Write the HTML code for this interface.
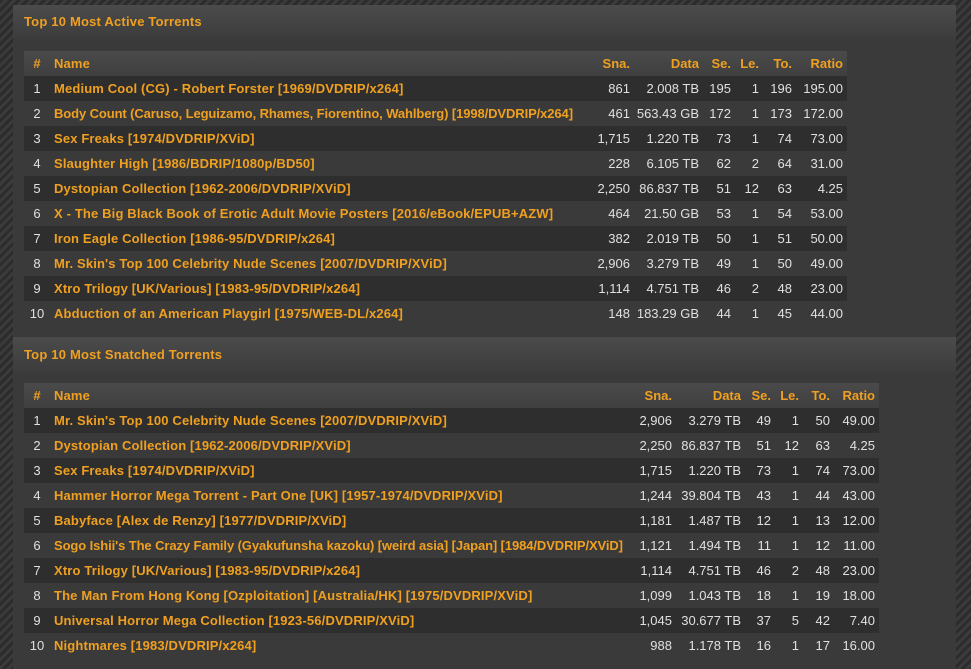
<!DOCTYPE html>
<html><head><style>
html,body{margin:0;width:971px;height:669px;overflow:hidden;}
body{background:#2f2f2f repeating-linear-gradient(135deg,#2c2c2c 0 3px,#3b3b3b 3px 6px);font-family:"Liberation Sans",sans-serif;font-size:13px;}
.wrap{position:absolute;left:13px;top:5px;width:943px;height:664px;background:#3a3a3a;}
.hd{position:absolute;left:0;width:943px;height:34px;background:linear-gradient(#4b4b4b,#3c3c3c);color:#f0a020;font-weight:bold;font-size:13px;line-height:34px;text-indent:11px;letter-spacing:0.2px;}
table{position:absolute;left:11px;border-collapse:collapse;table-layout:fixed;}
td,th{height:25px;padding:0 4px 0 0;white-space:nowrap;overflow:hidden;text-align:right;color:#e0e0e0;}
th{color:#f0a020;font-weight:bold;background:linear-gradient(#4a4a4a,#3f3f3f);}
td.n,th.n{text-align:left;color:#f0a020;font-weight:bold;padding:0 0 0 4px;letter-spacing:0.15px;overflow:visible;}
td.n.t{letter-spacing:-0.1px;}
td.i,th.i{text-align:center;padding:0;}
th.i{color:#f0a020}
tr.o td{background:#2e2e2e;}
tr.e td{background:#3a3a3a;}
</style></head><body>
<div class="wrap">
<div class="hd" style="top:0">Top 10 Most Active Torrents</div>
<table style="top:46px;width:823px">
<colgroup><col style="width:26px"><col style="width:539px"><col style="width:45px"><col style="width:69px"><col style="width:32px"><col style="width:28px"><col style="width:33px"><col style="width:51px"></colgroup>
<tr><th class="i">#</th><th class="n">Name</th><th>Sna.</th><th>Data</th><th>Se.</th><th>Le.</th><th>To.</th><th>Ratio</th></tr>
<tr class="o"><td class="i">1</td><td class="n">Medium Cool (CG) - Robert Forster [1969/DVDRIP/x264]</td><td>861</td><td>2.008 TB</td><td>195</td><td>1</td><td>196</td><td>195.00</td></tr>
<tr class="e"><td class="i">2</td><td class="n t">Body Count (Caruso, Leguizamo, Rhames, Fiorentino, Wahlberg) [1998/DVDRIP/x264]</td><td>461</td><td>563.43 GB</td><td>172</td><td>1</td><td>173</td><td>172.00</td></tr>
<tr class="o"><td class="i">3</td><td class="n">Sex Freaks [1974/DVDRIP/XViD]</td><td>1,715</td><td>1.220 TB</td><td>73</td><td>1</td><td>74</td><td>73.00</td></tr>
<tr class="e"><td class="i">4</td><td class="n">Slaughter High [1986/BDRIP/1080p/BD50]</td><td>228</td><td>6.105 TB</td><td>62</td><td>2</td><td>64</td><td>31.00</td></tr>
<tr class="o"><td class="i">5</td><td class="n">Dystopian Collection [1962-2006/DVDRIP/XViD]</td><td>2,250</td><td>86.837 TB</td><td>51</td><td>12</td><td>63</td><td>4.25</td></tr>
<tr class="e"><td class="i">6</td><td class="n">X - The Big Black Book of Erotic Adult Movie Posters [2016/eBook/EPUB+AZW]</td><td>464</td><td>21.50 GB</td><td>53</td><td>1</td><td>54</td><td>53.00</td></tr>
<tr class="o"><td class="i">7</td><td class="n">Iron Eagle Collection [1986-95/DVDRIP/x264]</td><td>382</td><td>2.019 TB</td><td>50</td><td>1</td><td>51</td><td>50.00</td></tr>
<tr class="e"><td class="i">8</td><td class="n">Mr. Skin's Top 100 Celebrity Nude Scenes [2007/DVDRIP/XViD]</td><td>2,906</td><td>3.279 TB</td><td>49</td><td>1</td><td>50</td><td>49.00</td></tr>
<tr class="o"><td class="i">9</td><td class="n">Xtro Trilogy [UK/Various] [1983-95/DVDRIP/x264]</td><td>1,114</td><td>4.751 TB</td><td>46</td><td>2</td><td>48</td><td>23.00</td></tr>
<tr class="e"><td class="i">10</td><td class="n">Abduction of an American Playgirl [1975/WEB-DL/x264]</td><td>148</td><td>183.29 GB</td><td>44</td><td>1</td><td>45</td><td>44.00</td></tr>
</table>
<div class="hd" style="top:332px;height:35px;line-height:35px">Top 10 Most Snatched Torrents</div>
<table style="top:378px;width:855px">
<colgroup><col style="width:26px"><col style="width:581px"><col style="width:45px"><col style="width:69px"><col style="width:30px"><col style="width:28px"><col style="width:31px"><col style="width:45px"></colgroup>
<tr><th class="i">#</th><th class="n">Name</th><th>Sna.</th><th>Data</th><th>Se.</th><th>Le.</th><th>To.</th><th>Ratio</th></tr>
<tr class="o"><td class="i">1</td><td class="n">Mr. Skin's Top 100 Celebrity Nude Scenes [2007/DVDRIP/XViD]</td><td>2,906</td><td>3.279 TB</td><td>49</td><td>1</td><td>50</td><td>49.00</td></tr>
<tr class="e"><td class="i">2</td><td class="n">Dystopian Collection [1962-2006/DVDRIP/XViD]</td><td>2,250</td><td>86.837 TB</td><td>51</td><td>12</td><td>63</td><td>4.25</td></tr>
<tr class="o"><td class="i">3</td><td class="n">Sex Freaks [1974/DVDRIP/XViD]</td><td>1,715</td><td>1.220 TB</td><td>73</td><td>1</td><td>74</td><td>73.00</td></tr>
<tr class="e"><td class="i">4</td><td class="n">Hammer Horror Mega Torrent - Part One [UK] [1957-1974/DVDRIP/XViD]</td><td>1,244</td><td>39.804 TB</td><td>43</td><td>1</td><td>44</td><td>43.00</td></tr>
<tr class="o"><td class="i">5</td><td class="n">Babyface [Alex de Renzy] [1977/DVDRIP/XViD]</td><td>1,181</td><td>1.487 TB</td><td>12</td><td>1</td><td>13</td><td>12.00</td></tr>
<tr class="e"><td class="i">6</td><td class="n t">Sogo Ishii's The Crazy Family (Gyakufunsha kazoku) [weird asia] [Japan] [1984/DVDRIP/XViD]</td><td>1,121</td><td>1.494 TB</td><td>11</td><td>1</td><td>12</td><td>11.00</td></tr>
<tr class="o"><td class="i">7</td><td class="n">Xtro Trilogy [UK/Various] [1983-95/DVDRIP/x264]</td><td>1,114</td><td>4.751 TB</td><td>46</td><td>2</td><td>48</td><td>23.00</td></tr>
<tr class="e"><td class="i">8</td><td class="n">The Man From Hong Kong [Ozploitation] [Australia/HK] [1975/DVDRIP/XViD]</td><td>1,099</td><td>1.043 TB</td><td>18</td><td>1</td><td>19</td><td>18.00</td></tr>
<tr class="o"><td class="i">9</td><td class="n">Universal Horror Mega Collection [1923-56/DVDRIP/XViD]</td><td>1,045</td><td>30.677 TB</td><td>37</td><td>5</td><td>42</td><td>7.40</td></tr>
<tr class="e"><td class="i">10</td><td class="n">Nightmares [1983/DVDRIP/x264]</td><td>988</td><td>1.178 TB</td><td>16</td><td>1</td><td>17</td><td>16.00</td></tr>
</table>
</div>
</body></html>
